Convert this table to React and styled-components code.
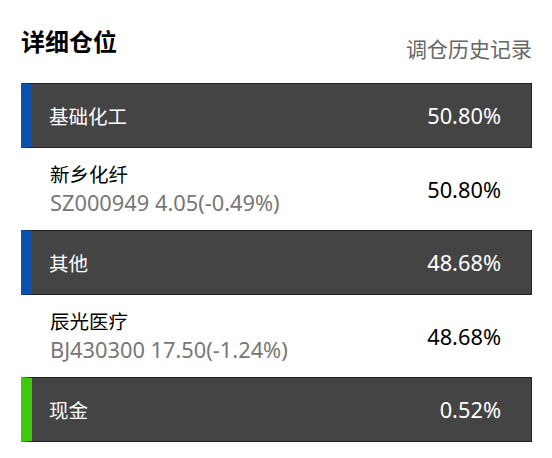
import React from "react";
import styled, { createGlobalStyle } from "styled-components";

const GlobalStyle = createGlobalStyle`
  body {
    margin: 0;
    background: #fff;
    font-family: "Noto Sans", "Noto Sans CJK SC", sans-serif;
  }
`;

const data = [
  {
    sector: "基础化工",
    percent: "50.80%",
    color: "#0a50ad",
    stocks: [{ name: "新乡化纤", info: "SZ000949 4.05(-0.49%)", percent: "50.80%" }],
  },
  {
    sector: "其他",
    percent: "48.68%",
    color: "#0a50ad",
    stocks: [{ name: "辰光医疗", info: "BJ430300 17.50(-1.24%)", percent: "48.68%" }],
  },
  { sector: "现金", percent: "0.52%", color: "#3fc80d", stocks: [] },
];

export default function App() {
  return (
    <>
      <GlobalStyle />
      <Page>
        <Header>
          <Title>详细仓位</Title>
          <HistoryLink>调仓历史记录</HistoryLink>
        </Header>
        <List>
          {data.map((group) => (
            <React.Fragment key={group.sector}>
              <SectorRow $color={group.color}>
                <SectorName>{group.sector}</SectorName>
                <Percent>{group.percent}</Percent>
              </SectorRow>
              {group.stocks.map((s) => (
                <StockRow key={s.name}>
                  <StockInfo>
                    <StockName>{s.name}</StockName>
                    <StockCode>{s.info}</StockCode>
                  </StockInfo>
                  <Percent>{s.percent}</Percent>
                </StockRow>
              ))}
            </React.Fragment>
          ))}
        </List>
      </Page>
    </>
  );
}

const Page = styled.div`
  width: 511px;
  padding-left: 21px;
`;

const Header = styled.div`
  display: flex;
  justify-content: space-between;
  align-items: flex-start;
  height: 83px;
`;

const Title = styled.h2`
  margin: 27px 0 0;
  font-size: 24px;
  font-weight: 700;
  color: #000;
  line-height: 30px;
`;

const HistoryLink = styled.span`
  margin: 36px 0 0;
  font-size: 21px;
  color: #666;
  line-height: 26px;
`;

const List = styled.div`
  display: flex;
  flex-direction: column;
`;

const SectorRow = styled.div`
  display: flex;
  justify-content: space-between;
  align-items: center;
  height: 65px;
  box-sizing: border-box;
  padding: 0 30px 0 17px;
  background: #444;
  border: 1px solid #222;
  border-left: 11px solid ${(p) => p.$color};
  color: #fff;
`;

const SectorName = styled.span`
  font-size: 19.5px;
`;

const Percent = styled.span`
  font-size: 21.8px;
`;

const StockRow = styled.div`
  display: flex;
  justify-content: space-between;
  align-items: center;
  height: 82px;
  box-sizing: border-box;
  padding: 0 31px 0 29px;
  color: #000;
`;

const StockInfo = styled.div`
  display: flex;
  flex-direction: column;
`;

const StockName = styled.span`
  font-size: 19.5px;
  line-height: 28px;
`;

const StockCode = styled.span`
  font-size: 21.8px;
  line-height: 28px;
  color: #777;
`;
